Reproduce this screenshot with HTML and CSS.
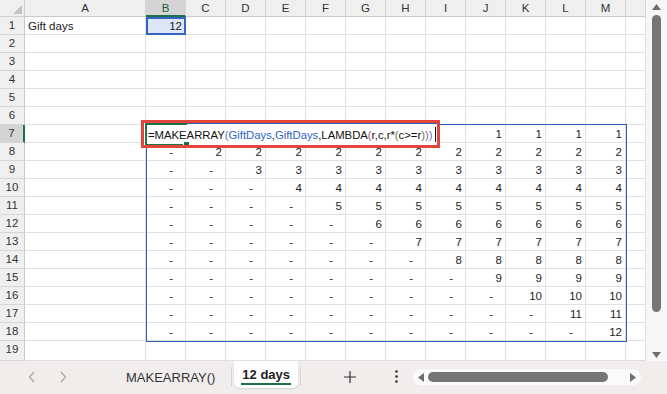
FILE: index.html
```html
<!DOCTYPE html>
<html lang="en">
<head>
  <meta charset="UTF-8">
  <title>12 days - MAKEARRAY</title>
  <link rel="stylesheet" href="styles.css">
</head>
<body>
  <div class="app">
    <div class="sheet-area">
      <div class="grid-wrap">
        <div class="grid" id="grid"></div>

        <!-- overlays: spill range, cell editor, annotation -->
        <div class="spill"></div>
        <div class="editor">=MAKEARRAY<span class="p1">(</span><span class="ref">GiftDays</span>,<span class="ref">GiftDays</span>,LAMBDA<span class="p2">(</span>r,c,r*<span class="p3">(</span>c&gt;=r<span class="p3">)</span><span class="p2">)</span><span class="p1">)</span><span class="caret"></span></div>
        <div class="active-cell"><span class="handle"></span></div>
        <div class="callout"></div>
      </div>
      <div class="vscroll">
        <svg class="arrow" width="9" height="6" viewBox="0 0 9 6"><path d="M0 6 L4.5 0 L9 6 Z" fill="#6e6e6e"/></svg>
        <div class="vthumb"></div>
        <svg class="arrow" width="9" height="6" viewBox="0 0 9 6"><path d="M0 0 L4.5 6 L9 0 Z" fill="#6e6e6e"/></svg>
      </div>
    </div>

    <div class="tabbar">
      <div class="nav">
        <svg width="8" height="12" viewBox="0 0 8 12"><path d="M6 1 L1.5 6 L6 11" fill="none" stroke="#a9a9a9" stroke-width="1.3"/></svg>
        <svg width="8" height="12" viewBox="0 0 8 12"><path d="M2 1 L6.5 6 L2 11" fill="none" stroke="#a9a9a9" stroke-width="1.3"/></svg>
      </div>
      <div class="tab">MAKEARRAY()</div>
      <div class="sep"></div>
      <div class="tab active"><span>12 days</span></div>
      <div class="sep"></div>
      <div class="add">
        <svg width="12" height="12" viewBox="0 0 12 12"><path d="M6 0 V12 M0 6 H12" stroke="#333" stroke-width="1.2"/></svg>
      </div>
      <div class="more">
        <svg width="3" height="13" viewBox="0 0 3 13"><circle cx="1.5" cy="1.5" r="1.3" fill="#333"/><circle cx="1.5" cy="6.5" r="1.3" fill="#333"/><circle cx="1.5" cy="11.5" r="1.3" fill="#333"/></svg>
      </div>
      <div class="hscroll">
        <svg width="6" height="9" viewBox="0 0 6 9"><path d="M6 0 L0 4.5 L6 9 Z" fill="#6e6e6e"/></svg>
        <div class="hthumb"></div>
        <svg width="6" height="9" viewBox="0 0 6 9"><path d="M0 0 L6 4.5 L0 9 Z" fill="#6e6e6e"/></svg>
      </div>
    </div>
  </div>

  <script>
    // Build the worksheet grid: header row + 19 rows
    const letters = ['A','B','C','D','E','F','G','H','I','J','K','L','M'];
    const grid = document.getElementById('grid');

    function cell(cls, text) {
      const d = document.createElement('div');
      d.className = cls;
      if (text !== undefined) d.textContent = text;
      grid.appendChild(d);
      return d;
    }

    // header row
    cell('corner');
    letters.forEach(l => cell(l === 'B' ? 'colhead hl' : 'colhead', l));
    cell('colhead');

    for (let row = 1; row <= 19; row++) {
      cell(row === 7 ? 'rowhead hl' : 'rowhead', row);
      letters.forEach((l, i) => {
        let text = '';
        let cls = 'cell';
        if (row === 1 && l === 'A') { text = 'Gift days'; cls += ' left'; }
        if (row === 1 && l === 'B') { text = '12'; cls += ' named'; }
        if (row >= 7 && row <= 18 && i >= 1) {
          const r = row - 6, c = i;
          if (!(row === 7 && c <= 8)) {
            if (c >= r) text = r;
            else { text = '-'; cls += ' dash'; }
          }
        }
        cell(cls, text);
      });
      cell('cell');
    }
  </script>
</body>
</html>
```

FILE: styles.css
```css
/* General */
body {
  margin: 0;
  width: 667px;
  height: 394px;
  overflow: hidden;
  font-family: 'Liberation Sans', Arial, sans-serif;
  color: #222;
  background: #fff;
}

.app {
  display: flex;
  flex-direction: column;
  height: 394px;
}

.sheet-area {
  display: flex;
  height: 361px;
  overflow: hidden;
}

.grid-wrap {
  position: relative;
  width: 646px;
}

/* Worksheet grid */
.grid {
  display: grid;
  grid-template-columns: 25px 121px repeat(12, 40px) 20px;
  grid-template-rows: 17px repeat(18, 18px) 20px;
}

.grid > div {
  box-sizing: border-box;
  white-space: nowrap;
  overflow: hidden;
}

.corner {
  background: #efefef;
  border-right: 1px solid #cfcfcf;
  border-bottom: 1px solid #cfcfcf;
  position: relative;
}

.corner::after {
  content: '';
  position: absolute;
  right: 2px;
  bottom: 2px;
  border-left: 9px solid transparent;
  border-bottom: 9px solid #c4c4c4;
}

.colhead {
  background: #efefef;
  border-right: 1px solid #d6d6d6;
  border-bottom: 1px solid #c9c9c9;
  font-size: 11.5px;
  line-height: 16px;
  text-align: center;
  color: #333;
}

.colhead.hl {
  background: #d4d4d4;
  border-bottom: 2px solid #1e7145;
  color: #1f5c38;
}

.rowhead {
  background: #efefef;
  border-right: 1px solid #c9c9c9;
  border-bottom: 1px solid #d6d6d6;
  font-size: 11.5px;
  line-height: 17px;
  text-align: center;
  color: #333;
}

.rowhead.hl {
  background: #d4d4d4;
  border-right: 2px solid #1e7145;
  color: #333;
}

.cell {
  border-right: 1px solid #e0e0e0;
  border-bottom: 1px solid #e0e0e0;
  font-size: 11.5px;
  line-height: 18px;
  text-align: right;
  padding-right: 3px;
  color: #222;
}

.cell.left {
  text-align: left;
  padding-left: 3px;
}

.cell.dash {
  padding-right: 12px;
}

.cell.named {
  background: #dce6f6;
  outline: 2px solid #3564c2;
  outline-offset: -2px;
}

/* Overlays */
.spill {
  position: absolute;
  left: 146px;
  top: 124px;
  width: 481px;
  height: 218px;
  border: 1px solid #2e5fae;
  box-sizing: border-box;
}

.editor {
  position: absolute;
  left: 145px;
  top: 123px;
  width: 292px;
  height: 22px;
  background: #fff;
  font-size: 11.3px;
  line-height: 22px;
  padding-left: 3px;
  box-sizing: border-box;
  border-top: 1px solid #2e5fae;
  white-space: nowrap;
  overflow: hidden;
  color: #111;
}

.editor .ref { color: #2f62c6; }
.editor .p1 { color: #5677b4; }
.editor .p2 { color: #a4509a; }
.editor .p3 { color: #3f8a3f; }

.caret {
  display: inline-block;
  width: 1px;
  height: 15px;
  background: #111;
  margin-left: 2px;
  vertical-align: -3px;
}

.active-cell {
  position: absolute;
  left: 145px;
  top: 123px;
  width: 42px;
  height: 23px;
  border: 2px solid #1e7145;
  border-right: none;
  box-sizing: border-box;
}

.handle {
  position: absolute;
  right: -3px;
  bottom: -4px;
  width: 5px;
  height: 5px;
  background: #1e7145;
  border: 1px solid #fff;
}

.callout {
  position: absolute;
  left: 141px;
  top: 120px;
  width: 299px;
  height: 28px;
  border: 3px solid #e2453b;
  box-sizing: border-box;
}

/* Vertical scrollbar */
.vscroll {
  width: 21px;
  background: #f6f6f6;
  display: flex;
  flex-direction: column;
  align-items: center;
  padding: 4px 0 3px;
  box-sizing: border-box;
}

.vthumb {
  width: 9px;
  flex: 0 0 297px;
  margin: 5px 0 auto;
  background: #767676;
  border-radius: 5px;
}

/* Sheet tab bar */
.tabbar {
  flex: 1;
  display: flex;
  align-items: stretch;
  background: #f1eded;
  font-size: 13px;
  color: #333;
}

.nav {
  width: 109px;
  display: flex;
  align-items: center;
  gap: 23px;
  padding-left: 28px;
  box-sizing: border-box;
  padding-bottom: 1px;
}

.tab {
  display: flex;
  align-items: center;
  padding: 0 16px 1px 17px;
}

.tab.active {
  background: #fff;
  margin: 0 2px 6px;
  padding: 0 7px;
  border-radius: 0 0 6px 6px;
  box-shadow: 0 1px 2px rgba(0, 0, 0, 0.12);
  font-weight: bold;
  color: #222;
}

.tab.active span {
  border-bottom: 2px solid #1e7145;
  line-height: 16px;
  padding: 0 1px;
  margin-top: 3px;
}

.sep {
  width: 1px;
  background: #d8d4d4;
  margin: 6px 0 8px;
}

.add {
  width: 24px;
  margin-left: 37px;
  display: flex;
  align-items: center;
  justify-content: center;
  padding-bottom: 2px;
}

.more {
  width: 8px;
  margin-left: 30px;
  display: flex;
  align-items: center;
  justify-content: center;
  padding-bottom: 2px;
}

.hscroll {
  width: 228px;
  height: 16px;
  margin: 8px 0 0 13px;
  background: #fafafa;
  border-radius: 8px;
  display: flex;
  align-items: center;
  gap: 4px;
  padding: 0 5px;
  box-sizing: border-box;
}

.hthumb {
  flex: 1;
  height: 10px;
  background: #767676;
  border-radius: 5px;
  margin-right: 18px;
}
```
